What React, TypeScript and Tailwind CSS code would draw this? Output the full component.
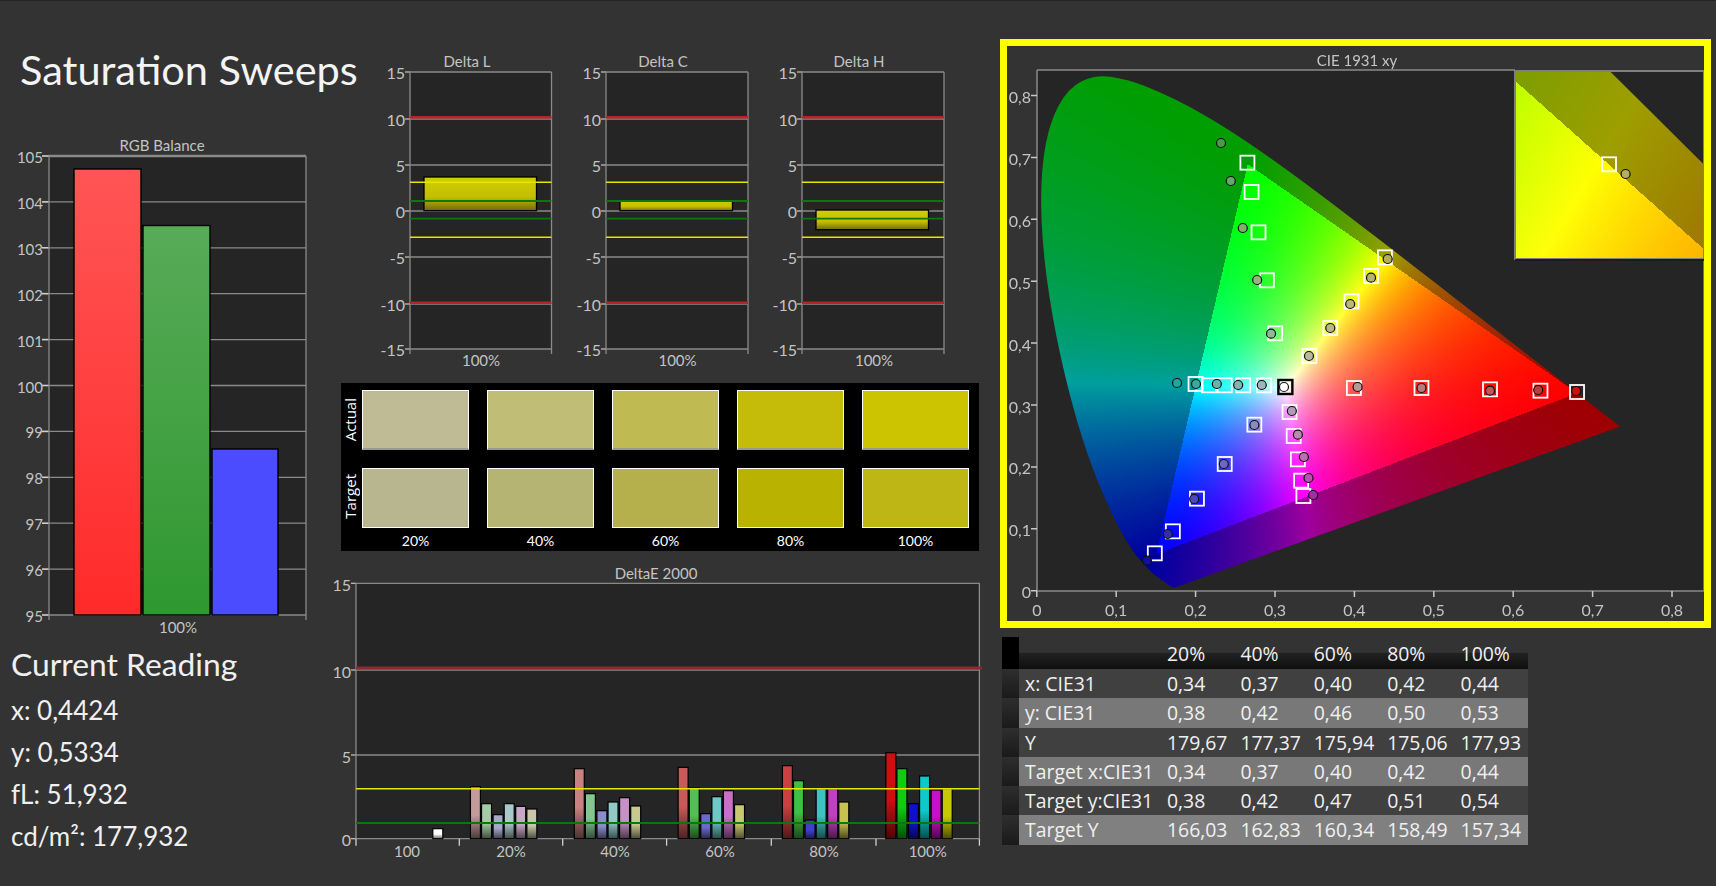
import { useEffect, useRef } from "react";

const LOCUS: [number, number][] = [
  [0.1741, 0.005], [0.1733, 0.0048], [0.1714, 0.0051], [0.1689, 0.0069], [0.1644, 0.0109], [0.1566, 0.0177],
  [0.144, 0.0297], [0.1241, 0.0578], [0.1096, 0.0868], [0.0913, 0.1327], [0.0687, 0.2007], [0.0454, 0.295],
  [0.0235, 0.4127], [0.0082, 0.5384], [0.0039, 0.6548], [0.0139, 0.7502], [0.0389, 0.812], [0.0743, 0.8338],
  [0.1142, 0.8262], [0.1547, 0.8059], [0.1929, 0.7816], [0.2296, 0.7543], [0.2658, 0.7243], [0.3016, 0.6923],
  [0.3373, 0.6589], [0.3731, 0.6245], [0.4087, 0.5896], [0.4441, 0.5547], [0.4788, 0.5202], [0.5125, 0.4866],
  [0.5448, 0.4544], [0.5752, 0.4242], [0.6029, 0.3965], [0.627, 0.3725], [0.6658, 0.334], [0.6915, 0.3083],
  [0.7079, 0.292], [0.719, 0.2809], [0.7347, 0.2653],
];

const CHART_FONT = "Lato, 'Liberation Sans', sans-serif";
const LABEL = "#c4c4c4";
const GRID = "#8a8a8a";
const PLOT = "#252525";

function gamutColor(x: number, y: number): [number, number, number] {
  const X = x / y;
  const Z = (1 - x - y) / y;
  const r0 = 2.4935 * X - 0.9314 - 0.4027 * Z;
  const g0 = -0.8295 * X + 1.7627 + 0.0236 * Z;
  const b0 = 0.0358 * X - 0.0762 + 0.9569 * Z;
  const inside = r0 >= 0 && g0 >= 0 && b0 >= 0;
  const r = Math.max(r0, 0);
  const g = Math.max(g0, 0);
  const b = Math.max(b0, 0);
  const m = Math.max(r, g, b, 1e-6);
  const k = inside ? 1 : 0.62;
  const e = inside ? 1.3 : 1;
  const f = (v: number) => Math.round(255 * k * Math.pow(v / m, e));
  return [f(r), f(g), f(b)];
}

function paint(
  ctx: CanvasRenderingContext2D,
  px: number,
  py: number,
  w: number,
  h: number,
  toX: (cx: number) => number,
  toY: (cy: number) => number,
  fromX: (x: number) => number,
  fromY: (y: number) => number
) {
  const off = document.createElement("canvas");
  off.width = w;
  off.height = h;
  const octx = off.getContext("2d")!;
  const img = octx.createImageData(w, h);
  for (let j = 0; j < h; j++) {
    for (let i = 0; i < w; i++) {
      const yy = Math.max(toY(py + j), 0.001);
      const [r, g, b] = gamutColor(toX(px + i), yy);
      const o = (j * w + i) * 4;
      img.data[o] = r;
      img.data[o + 1] = g;
      img.data[o + 2] = b;
      img.data[o + 3] = 255;
    }
  }
  octx.putImageData(img, 0, 0);
  ctx.save();
  ctx.fillStyle = PLOT;
  ctx.fillRect(px, py, w, h);
  ctx.beginPath();
  ctx.rect(px, py, w, h);
  ctx.clip();
  ctx.beginPath();
  const pts = LOCUS.map(([x, y]) => [fromX(x), fromY(y)]);
  ctx.moveTo(pts[0][0], pts[0][1]);
  for (let i = 1; i < pts.length - 1; i++) {
    const mx = (pts[i][0] + pts[i + 1][0]) / 2;
    const my = (pts[i][1] + pts[i + 1][1]) / 2;
    ctx.quadraticCurveTo(pts[i][0], pts[i][1], mx, my);
  }
  ctx.lineTo(pts[pts.length - 1][0], pts[pts.length - 1][1]);
  ctx.closePath();
  ctx.clip();
  ctx.drawImage(off, px, py);
  ctx.restore();
}

function GamutCanvas() {
  const ref = useRef<HTMLCanvasElement>(null);
  useEffect(() => {
    const c = ref.current;
    if (!c) return;
    const ctx = c.getContext("2d");
    if (!ctx) return;
    // canvas origin = page (1007, 46)
    const X0 = 1036.8 - 1007;
    const Y0 = 590.7 - 46;
    paint(
      ctx, 30, 24, 667, 521,
      (cx) => (cx - X0) / 794,
      (cy) => (Y0 - cy) / 619,
      (x) => X0 + 794 * x,
      (y) => Y0 - 619 * y
    );
    const ix = 1609 - 1007;
    const iy = 164.3 - 46;
    const S = 3800;
    paint(
      ctx, 508, 25, 190, 189,
      (cx) => 0.44 + (cx - ix) / S,
      (cy) => 0.534 - (cy - iy) / S,
      (x) => ix + (x - 0.44) * S,
      (y) => iy - (y - 0.534) * S
    );
  }, []);
  return <canvas ref={ref} width={697} height={575} className="col-start-1 row-start-1 block h-[575px] w-[697px]" />;
}

const Z5 = (zx: number, zy: number): [number, number] => [990 + zx / 2.16, 30 + zy / 3];
const Z6 = (zx: number, zy: number): [number, number] => [990 + zx / 2.16, 320 + zy / 3];

const SQUARES: [number, number, string][] = [
  [...Z5(556, 398), "#fff"], [...Z5(565, 486), "#fff"], [...Z5(580, 607), "#fff"], [...Z5(598, 751), "#fff"],
  [...Z5(853, 682), "#fff"], [...Z5(823, 738), "#fff"], [...Z5(781, 814), "#fff"], [...Z6(735, 24), "#fff"],
  [...Z6(616, 40), "#fff"], [...Z6(690, 108), "#fff"], [...Z6(444, 192), "#fff"], [...Z6(473, 196), "#fff"],
  [...Z6(507, 196), "#fff"], [...Z6(547, 196), "#fff"], [...Z6(592, 196), "#fff"], [...Z6(638, 201), "#000"],
  [...Z6(786, 204), "#fff"], [...Z6(932, 204), "#fff"], [...Z6(1080, 208), "#fff"], [...Z6(1189, 212), "#fff"],
  [...Z6(1268, 216), "#fff"], [...Z6(647, 276), "#fff"], [...Z6(571, 314), "#fff"], [...Z6(656, 348), "#fff"],
  [...Z6(507, 432), "#fff"], [...Z6(665, 418), "#fff"], [...Z6(672, 482), "#fff"], [...Z6(677, 528), "#fff"],
  [...Z6(447, 536), "#fff"], [...Z6(395, 634), "#fff"], [...Z6(356, 700), "#fff"], [1609, 164.3, "#fff"],
];

const CIRCLES: [number, number, string][] = [
  [...Z5(499, 339), "#4a9a4a"], [...Z5(520, 453), "#6aa86a"], [...Z5(546, 594), "#7fb070"], [...Z5(577, 750), "#95b87a"],
  [...Z5(859, 687), "#b5b055"], [...Z5(823, 743), "#b8b468"], [...Z5(778, 822), "#b8b878"], [...Z6(735, 24), "#b8b88c"],
  [...Z6(689, 108), "#b9b99c"], [...Z6(607, 41), "#8fb89a"], [...Z6(404, 189), "#1fa79f"], [...Z6(445, 192), "#3aa8a0"],
  [...Z6(490, 192), "#6ab2ac"], [...Z6(536, 195), "#82b5b0"], [...Z6(587, 195), "#9ababa"], [...Z6(635, 201), "#ffffff"],
  [...Z6(794, 201), "#b89a98"], [...Z6(932, 204), "#bb7a78"], [...Z6(1080, 212), "#bb5a58"], [...Z6(1184, 210), "#bb3c3c"],
  [...Z6(1266, 213), "#d01010"], [...Z6(652, 273), "#b09cb8"], [...Z6(571, 315), "#8a8abb"], [...Z6(665, 344), "#bb8ab0"],
  [...Z6(505, 432), "#6a6abb"], [...Z6(678, 411), "#bb70b0"], [...Z6(688, 474), "#bb50b0"], [...Z6(698, 525), "#a030a0"],
  [...Z6(441, 537), "#4a4abb"], [...Z6(384, 642), "#3030a0"], [...Z6(339, 722), "#1010a0"], [1625.6, 174, "#b5b055"],
];

function CieOverlay() {
  const xs = [0.1, 0.2, 0.3, 0.4, 0.5, 0.6, 0.7, 0.8];
  const X = (v: number) => 1036.8 + 794 * v;
  const Y = (v: number) => 590.7 - 619 * v;
  const fmt = (v: number) => v.toFixed(1).replace(".", ",");
  return (
    <svg viewBox="1007 46 697 575" width={697} height={575} className="col-start-1 row-start-1 block" style={{ fontFamily: CHART_FONT }}>
      <text x={1357} y={60} fill={LABEL} fontSize={15} textAnchor="middle" dominantBaseline="central">CIE 1931 xy</text>
      <path d="M1037 70H1515M1704 260V591H1037V70" fill="none" stroke={GRID} strokeWidth={1.5} />
      <rect x={1515} y={71} width={189} height={188} fill="none" stroke="#808080" strokeWidth={2} />
      <path d="M1515 260H1704" stroke="#1c1c1c" strokeWidth={2} />
      {[0, ...xs].map((v) => (
        <g key={v}>
          <path d={`M${X(v)} 591V597M1031 ${Y(v)}H1037`} stroke="#c8c8c8" strokeWidth={1.5} />
          <text x={X(v)} y={609} fill={LABEL} fontSize={16} textAnchor="middle" dominantBaseline="central">{v === 0 ? "0" : fmt(v)}</text>
          <text x={1031} y={Y(v) + 1} fill={LABEL} fontSize={16} textAnchor="end" dominantBaseline="central">{v === 0 ? "0" : fmt(v)}</text>
        </g>
      ))}
      {SQUARES.map(([x, y, c], i) => (
        <rect key={i} x={x - 7} y={y - 7} width={14} height={14} fill={c === "#000" ? "#ffffff55" : "none"} stroke={c === "#000" ? "#000" : "#ffffff"} strokeWidth={c === "#000" ? 2.4 : 1.8} />
      ))}
      {CIRCLES.map(([x, y, c], i) => (
        <circle key={i} cx={x} cy={y} r={4.5} fill={c} stroke="#101010" strokeWidth={1.2} />
      ))}
    </svg>
  );
}

function Gradients() {
  return (
    <defs>
      <linearGradient id="yl" x1="0" y1="0" x2="0" y2="1">
        <stop offset="0" stopColor="#cfcf00" />
        <stop offset="0.6" stopColor="#c4be00" />
        <stop offset="1" stopColor="#6e6a10" />
      </linearGradient>
      <linearGradient id="shade" x1="0" y1="0" x2="0" y2="1">
        <stop offset="0" stopColor="#000" stopOpacity="0" />
        <stop offset="0.55" stopColor="#000" stopOpacity="0" />
        <stop offset="1" stopColor="#000" stopOpacity="0.62" />
      </linearGradient>
      <linearGradient id="rd" x1="0" y1="0" x2="0" y2="1">
        <stop offset="0" stopColor="#ff5555" />
        <stop offset="1" stopColor="#ff2a2a" />
      </linearGradient>
      <linearGradient id="gn" x1="0" y1="0" x2="0" y2="1">
        <stop offset="0" stopColor="#58ab58" />
        <stop offset="1" stopColor="#2f982f" />
      </linearGradient>
    </defs>
  );
}

function RgbBalance() {
  const ticks = [105, 104, 103, 102, 101, 100, 99, 98, 97, 96, 95];
  const Y = (v: number) => 156 + (105 - v) * 45.9;
  return (
    <svg viewBox="0 135 341 500" width={341} height={500} className="block" style={{ fontFamily: CHART_FONT }}>
      <Gradients />
      <text x={162} y={145} fill={LABEL} fontSize={15} textAnchor="middle" dominantBaseline="central">RGB Balance</text>
      <rect x={49} y={156} width={257} height={459} fill={PLOT} />
      {ticks.map((t) => (
        <g key={t}>
          <path d={`M49 ${Y(t)}H306`} stroke={GRID} strokeWidth={t === 105 ? 2.4 : 1.3} />
          <path d={`M42 ${Y(t)}H49`} stroke="#d0d0d0" strokeWidth={1.6} />
          <text x={43} y={Y(t) + 1} fill={LABEL} fontSize={15} textAnchor="end" dominantBaseline="central">{t}</text>
        </g>
      ))}
      <path d="M49 156V620M306 156V620" stroke={GRID} strokeWidth={1.3} />
      <rect x={74} y={169} width={67} height={446} fill="url(#rd)" stroke="#000" strokeWidth={1.4} />
      <rect x={143} y={225.5} width={67} height={389.5} fill="url(#gn)" stroke="#000" strokeWidth={1.4} />
      <rect x={212} y={449} width={66} height={166} fill="#4c4cff" stroke="#000" strokeWidth={1.4} />
      <text x={178} y={627} fill={LABEL} fontSize={15} textAnchor="middle" dominantBaseline="central">100%</text>
    </svg>
  );
}

function DeltaChart({ title, left, right, top, bottom, titleX, labelX }: { title: string; left: number; right: number; top: number; bottom: number; titleX: number; labelX: number }) {
  const vb = left - 34;
  const ticks: [string, number][] = [["15", 72], ["10", 119], ["5", 165], ["0", 211], ["-5", 257], ["-10", 304], ["-15", 349]];
  return (
    <svg viewBox={`${vb} 50 196 322`} width={196} height={322} className="block" style={{ fontFamily: CHART_FONT }}>
      <text x={titleX} y={61} fill={LABEL} fontSize={15} textAnchor="middle" dominantBaseline="central">{title}</text>
      <rect x={left} y={72} width={right - left} height={277} fill={PLOT} />
      {ticks.map(([t, y]) => (
        <g key={t}>
          <path d={`M${left} ${y}H${right}`} stroke={GRID} strokeWidth={1.3} />
          <path d={`M${left - 5} ${y}H${left}`} stroke="#c8c8c8" strokeWidth={1.2} />
          <text x={left - 5} y={y} fill={LABEL} fontSize={16} textAnchor="end" dominantBaseline="central">{t}</text>
        </g>
      ))}
      <path d={`M${left} 72V354M${right} 72V354`} stroke={GRID} strokeWidth={1.3} />
      <rect x={left + 14} y={top} width={112.5} height={bottom - top} fill="url(#yl)" stroke="#000" strokeWidth={1.3} />
      <path d={`M${left} 117.3H${right}M${left} 302.7H${right}`} stroke="#b82424" strokeWidth={2.4} />
      <path d={`M${left} 182.3H${right}M${left} 237.3H${right}`} stroke="#e6e600" strokeWidth={1.4} />
      <path d={`M${left} 201H${right}M${left} 218.7H${right}`} stroke="#0a780a" strokeWidth={1.8} />
      <text x={labelX} y={360} fill={LABEL} fontSize={15} textAnchor="middle" dominantBaseline="central">100%</text>
    </svg>
  );
}

const SWATCH_ACTUAL = ["bg-[#bebb95]", "bg-[#c0be76]", "bg-[#c0ba52]", "bg-[#c4bc08]", "bg-[#ccc400]"];
const SWATCH_TARGET = ["bg-[#b8b68e]", "bg-[#b6b472]", "bg-[#b6b04c]", "bg-[#bab200]", "bg-[#beb614]"];
const PCTS = ["20%", "40%", "60%", "80%", "100%"];

function Swatches() {
  return (
    <div className="mt-[11px] flex h-[168px] w-[638px] bg-black pt-[7px] text-white" style={{ fontFamily: CHART_FONT }}>
      <div className="flex w-[21px] flex-col pr-[3px]">
        <div className="flex h-[60px] items-center justify-center">
          <span className="rotate-180 text-[15px] leading-none [writing-mode:vertical-lr]" style={{ fontFamily: "'Open Sans', sans-serif" }}>Actual</span>
        </div>
        <div className="mt-[16px] flex h-[60px] items-center justify-center">
          <span className="rotate-180 text-[15px] leading-none [writing-mode:vertical-lr]" style={{ fontFamily: "'Open Sans', sans-serif" }}>Target</span>
        </div>
      </div>
      <div className="grid grid-cols-[107px_107px_107px_107px_107px] gap-x-[18px]">
        {SWATCH_ACTUAL.map((c) => (
          <div key={c} className={`h-[60px] border border-b-2 border-white border-b-[#9a9a90] ${c}`} />
        ))}
        {SWATCH_TARGET.map((c) => (
          <div key={c} className={`mt-[16px] h-[60px] border border-white ${c}`} />
        ))}
        {PCTS.map((p) => (
          <div key={p} className="mt-[3px] text-center text-[14px] leading-[16px]">{p}</div>
        ))}
      </div>
    </div>
  );
}

const DE_X = [352, 378, 405, 431, 458, 484];
const DE_GROUPS: { dx: number; tops: number[]; colors: string[] }[] = [
  { dx: 0, tops: [680, 731, 764, 731, 739, 747], colors: ["#c49a9a", "#a4cca4", "#a8a8cc", "#a8caca", "#c8a8c8", "#c8c8a8"] },
  { dx: 243, tops: [626, 701, 752, 726, 713, 738], colors: ["#c88080", "#80c890", "#8c8ccc", "#90c8c8", "#c890c8", "#c8c890"] },
  { dx: 486, tops: [622, 684, 761, 710, 692, 734], colors: ["#c85a5a", "#50c050", "#6a6ac8", "#70c8c8", "#c870c8", "#c8c870"] },
  { dx: 730, tops: [617, 662, 780, 686, 686, 726], colors: ["#c84040", "#40c040", "#4040c8", "#40c0c0", "#c040c0", "#c8c050"] },
  { dx: 972, tops: [578, 626, 731, 648, 690, 686], colors: ["#cc1010", "#10cc10", "#1010cc", "#10c8c8", "#c810c8", "#c8c800"] },
];

function DeltaE() {
  const L = 356;
  const R = 979.4;
  const B = 838.7;
  const zx = (v: number) => 320 + v / 2.34;
  const zy = (v: number) => 560 + v / 3;
  const bar = (x: number, top: number, c: string, k: string) => (
    <g key={k}>
      <rect x={x} y={top} width={10} height={B - top} fill={c} stroke="#000" strokeWidth={1.2} />
      <rect x={x} y={top} width={10} height={B - top} fill="url(#shade)" />
    </g>
  );
  const xticks = [356, 459.3, 562.7, 666.6, 771.3, 876, 979.4];
  const labels: [string, number][] = [["100", 407], ["20%", 511], ["40%", 615], ["60%", 720], ["80%", 824], ["100%", 927.7]];
  return (
    <svg viewBox="341 560 644 302" width={644} height={302} className="block overflow-visible" style={{ fontFamily: CHART_FONT }}>
      <text x={656} y={573} fill={LABEL} fontSize={15} textAnchor="middle" dominantBaseline="central">DeltaE 2000</text>
      <rect x={L} y={583.3} width={R - L} height={B - 583.3} fill={PLOT} />
      {[[15, 583.3], [10, 670], [5, 755], [0, B]].map(([t, y]) => (
        <g key={t}>
          <path d={`M${L} ${y}H${R}`} stroke={GRID} strokeWidth={1.3} />
          <path d={`M${L - 5} ${y}H${L}`} stroke="#c8c8c8" strokeWidth={1.2} />
          <text x={L - 5} y={y + 1} fill={LABEL} fontSize={16} textAnchor="end" dominantBaseline="central">{t}</text>
        </g>
      ))}
      <path d={`M${L} 583V${B}M${R} 583V${B}`} stroke={GRID} strokeWidth={1.3} />
      {xticks.map((x) => (
        <path key={x} d={`M${x} ${B}V${B + 7}`} stroke="#d0d0d0" strokeWidth={1.3} />
      ))}
      {bar(zx(264), zy(806), "#ffffff", "w")}
      {DE_GROUPS.map((g, gi) =>
        g.tops.map((t, i) => bar(zx(DE_X[i] + g.dx), zy(t), g.colors[i], `${gi}-${i}`))
      )}
      <path d={`M${L} 668H982`} stroke="#8e2a2e" strokeWidth={3} />
      <path d={`M${L} 788.7H${R}`} stroke="#e6e600" strokeWidth={1.5} />
      <path d={`M${L} 823H${R}`} stroke="#0a780a" strokeWidth={1.8} />
      {labels.map(([t, x]) => (
        <text key={t} x={x} y={851} fill={LABEL} fontSize={15} textAnchor="middle" dominantBaseline="central">{t}</text>
      ))}
    </svg>
  );
}

const ROWS: { label: string; vals: string[]; bg: string }[] = [
  { label: "x: CIE31", vals: ["0,34", "0,37", "0,40", "0,42", "0,44"], bg: "bg-[#404040]" },
  { label: "y: CIE31", vals: ["0,38", "0,42", "0,46", "0,50", "0,53"], bg: "bg-[#787878]" },
  { label: "Y", vals: ["179,67", "177,37", "175,94", "175,06", "177,93"], bg: "bg-[#404040]" },
  { label: "Target x:CIE31", vals: ["0,34", "0,37", "0,40", "0,42", "0,44"], bg: "bg-[#787878]" },
  { label: "Target y:CIE31", vals: ["0,38", "0,42", "0,47", "0,51", "0,54"], bg: "bg-[#404040]" },
  { label: "Target Y", vals: ["166,03", "162,83", "160,34", "158,49", "157,34"], bg: "bg-[#808080]" },
];

function DataTable() {
  return (
    <div className="mt-[9px] ml-[2px] w-[526px] text-[19.4px] text-[#f0f0f0]" style={{ fontFamily: "'Open Sans', sans-serif" }}>
      <div className="flex h-[32px] leading-[34px]">
        <div className="w-[17px] bg-black" />
        <div className="flex flex-1 overflow-hidden bg-[linear-gradient(180deg,#333333_0%,#333333_48%,#222222_50%,#0e0e0e_100%)]">
          <div className="w-[148px] shrink-0" />
          {PCTS.map((p) => (
            <div key={p} className="w-[73.4px] shrink-0">{p}</div>
          ))}
        </div>
      </div>
      {ROWS.map((r) => (
        <div key={r.label} className="flex h-[29.3px] leading-[29.3px]">
          <div className="w-[17px] bg-[linear-gradient(180deg,#2e2e2e,#1a1a1a)]" />
          <div className={`flex flex-1 overflow-hidden ${r.bg}`}>
            <div className="w-[148px] shrink-0 whitespace-nowrap pl-[6px]">{r.label}</div>
            {r.vals.map((v, i) => (
              <div key={i} className="w-[73.4px] shrink-0">{v}</div>
            ))}
          </div>
        </div>
      ))}
    </div>
  );
}

export default function App() {
  return (
    <div className="flex h-[886px] w-[1716px] overflow-hidden border-t border-[#242424] bg-[#333333] text-white">
      <div className="w-[341px] shrink-0">
        <h1 className="mt-[43px] ml-[20px] h-[91px] whitespace-nowrap text-[41.5px] leading-[50px] font-normal text-[#f4f4f4]" style={{ fontFamily: "Lato, 'Open Sans', sans-serif" }}>
          Saturation Sweeps
        </h1>
        <RgbBalance />
        <div className="ml-[11px] text-[#f0f0f0]" style={{ fontFamily: "Lato, 'Open Sans', sans-serif" }}>
          <div className="mt-[9px] text-[31.8px] leading-[40px]">Current Reading</div>
          <div className="mt-[5px] text-[26px] leading-[42px]">x: 0,4424</div>
          <div className="text-[26px] leading-[42px]">y: 0,5334</div>
          <div className="text-[26px] leading-[42px]">fL: 51,932</div>
          <div className="text-[26px] leading-[42px]">cd/m²: 177,932</div>
        </div>
      </div>
      <div className="w-[659px] shrink-0 pt-[49px]">
        <div className="ml-[35px] flex">
          <DeltaChart title="Delta L" left={410} right={551.5} top={177} bottom={210.7} titleX={467} labelX={481} />
          <DeltaChart title="Delta C" left={606} right={748} top={200.7} bottom={210.7} titleX={663} labelX={677.5} />
          <DeltaChart title="Delta H" left={802} right={944} top={210} bottom={229.7} titleX={859} labelX={874} />
        </div>
        <Swatches />
        <div className="mt-[9px]">
          <DeltaE />
        </div>
      </div>
      <div className="w-[716px] shrink-0 pt-[38px]">
        <div className="w-[711px] border-[7px] border-[#ffff00] bg-[#333333]">
          <div className="grid h-[575px] w-[697px]">
            <GamutCanvas />
            <CieOverlay />
          </div>
        </div>
        <DataTable />
      </div>
    </div>
  );
}
